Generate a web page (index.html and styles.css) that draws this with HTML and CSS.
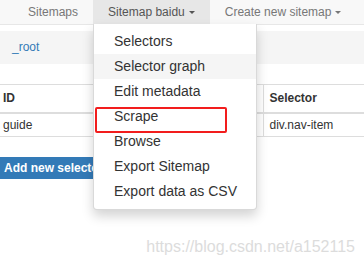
FILE: index.html
```html
<!DOCTYPE html>
<html lang="en">
<head>
    <meta charset="UTF-8">
    <meta name="viewport" content="width=device-width, initial-scale=1.0">
    <title>Web Scraper</title>
    <link rel="stylesheet" href="styles.css">
</head>
<body>
    <nav class="navbar">
        <ul class="nav">
            <li class="nav-item"><a href="#">Sitemaps</a></li>
            <li class="nav-item active">
                <a href="#">Sitemap baidu<span class="caret"></span></a>
                <ul class="dropdown-menu">
                    <li><a href="#">Selectors</a></li>
                    <li class="hover"><a href="#">Selector graph</a></li>
                    <li><a href="#">Edit metadata</a></li>
                    <li class="marked"><a href="#">Scrape</a></li>
                    <li><a href="#">Browse</a></li>
                    <li><a href="#">Export Sitemap</a></li>
                    <li><a href="#">Export data as CSV</a></li>
                </ul>
            </li>
            <li class="nav-item"><a href="#">Create new sitemap<span class="caret"></span></a></li>
        </ul>
    </nav>

    <div class="breadcrumb">
        <a href="#">_root</a>
    </div>

    <table class="selectors">
        <thead>
            <tr>
                <th class="col-id">ID</th>
                <th class="col-selector">Selector</th>
            </tr>
        </thead>
        <tbody>
            <tr>
                <td class="col-id">guide</td>
                <td class="col-selector">div.nav-item</td>
            </tr>
        </tbody>
    </table>

    <button class="btn-add" type="button">Add new selector</button>

    <div class="watermark">https://blog.csdn.net/a152115</div>
</body>
</html>
```

FILE: styles.css
```css
* {
    box-sizing: border-box;
    margin: 0;
    padding: 0;
}

body {
    font-family: "Liberation Sans", Arial, sans-serif;
    font-size: 12px;
    color: #333;
    background: #fff;
    position: relative;
    height: 266px;
    overflow: hidden;
}

a {
    text-decoration: none;
}

ul {
    list-style: none;
}

.navbar {
    height: 25px;
    background: #f8f8f8;
    border-bottom: 1px solid #e7e7e7;
}

.nav {
    display: flex;
    padding-left: 13px;
}

.nav-item {
    position: relative;
}

.nav-item > a {
    display: flex;
    align-items: center;
    height: 24px;
    padding: 0 15px;
    color: #777;
    white-space: nowrap;
}

.nav-item.active > a {
    background: #e7e7e7;
    color: #555;
}

.caret {
    width: 0;
    height: 0;
    margin-left: 4px;
    margin-top: 1px;
    border-top: 3px solid;
    border-left: 3px solid transparent;
    border-right: 3px solid transparent;
}

.dropdown-menu {
    position: absolute;
    top: 24px;
    left: 0;
    z-index: 10;
    width: 164px;
    padding: 5px 0;
    background: #fff;
    border: 1px solid rgba(0, 0, 0, .15);
    border-top: none;
    border-radius: 0 0 4px 4px;
    box-shadow: 0 6px 12px rgba(0, 0, 0, .175);
}

.dropdown-menu li {
    position: relative;
}

.dropdown-menu a {
    display: block;
    height: 25px;
    line-height: 25px;
    padding: 0 20px;
    font-size: 14px;
    color: #333;
    white-space: nowrap;
}

.dropdown-menu .hover a {
    background: #f5f5f5;
}

.dropdown-menu .marked::after {
    content: "";
    position: absolute;
    top: 3px;
    left: 1px;
    width: 128px;
    height: 22px;
    border: 2px solid #f21d1d;
    border-radius: 2px;
}

.breadcrumb {
    margin-top: 6px;
    height: 33px;
    line-height: 33px;
    padding-left: 12px;
    background: #f5f5f5;
}

.breadcrumb a {
    color: #337ab7;
}

.selectors {
    width: 100%;
    margin-top: 20px;
    border-collapse: collapse;
}

.selectors th,
.selectors td {
    text-align: left;
    padding: 0 3px;
    border-top: 1px solid #ddd;
}

.selectors th {
    height: 28px;
    border-bottom: 2px solid #ddd;
}

.selectors td {
    height: 24px;
    border-bottom: 1px solid #ddd;
}

.selectors .col-id {
    width: 263px;
}

.selectors .col-selector {
    padding-left: 6px;
    border-left: 1px solid #ddd;
}

.btn-add {
    display: block;
    margin-top: 20px;
    height: 22px;
    padding: 0 4px;
    font-family: inherit;
    font-size: 12px;
    font-weight: bold;
    color: #fff;
    background: #337ab7;
    border: none;
    border-radius: 0 3px 3px 0;
}

.watermark {
    position: absolute;
    right: 9px;
    top: 238px;
    font-size: 16px;
    color: #dcdcdc;
}
```
